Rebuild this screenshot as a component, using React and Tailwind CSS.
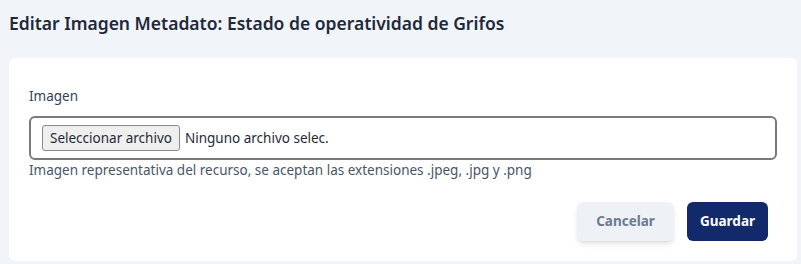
import React from "react";

const font = { fontFamily: "'Noto Sans', 'Open Sans', sans-serif" };

export default function App() {
  return (
    <div className="w-[801px] h-[264px] bg-[#f1f5f9] px-[9px] pt-[12px] overflow-hidden" style={font}>
      <h1 className="text-[17.5px] font-semibold text-[#1e293b] leading-[22px] h-[46px]">
        Editar Imagen Metadato: Estado de operatividad de Grifos
      </h1>

      <div className="bg-white rounded-md w-[788px] h-[203px] px-[20px] pt-[29px]">
        <label className="block text-[13.5px] text-[#334155] leading-[19px] mb-[10px]">Imagen</label>

        <div className="flex items-center h-[44px] w-[748px] border-2 border-[#7a7a7a] rounded-md px-[11px]">
          <span className="inline-flex items-center h-[26px] px-[7px] bg-[#efefef] border border-[#8a8a8a] rounded-[3px] text-[13.5px] text-[#1f2937]">
            Seleccionar archivo
          </span>
          <span className="ml-[5px] text-[13.5px] text-[#1f2937]">Ninguno archivo selec.</span>
        </div>

        <p className="text-[13.5px] text-[#475569] leading-[18px] mt-[1px]">
          Imagen representativa del recurso, se aceptan las extensiones .jpeg, .jpg y .png
        </p>

        <div className="flex justify-end gap-[13px] mt-[23px] pr-[9px]">
          <button className="h-[39px] w-[97px] rounded-md bg-[#eef2f7] shadow-md text-[13.5px] font-bold text-[#6b7a90]">
            Cancelar
          </button>
          <button className="h-[39px] w-[81px] rounded-md bg-[#12296b] text-[13.5px] font-bold text-white">
            Guardar
          </button>
        </div>
      </div>
    </div>
  );
}
